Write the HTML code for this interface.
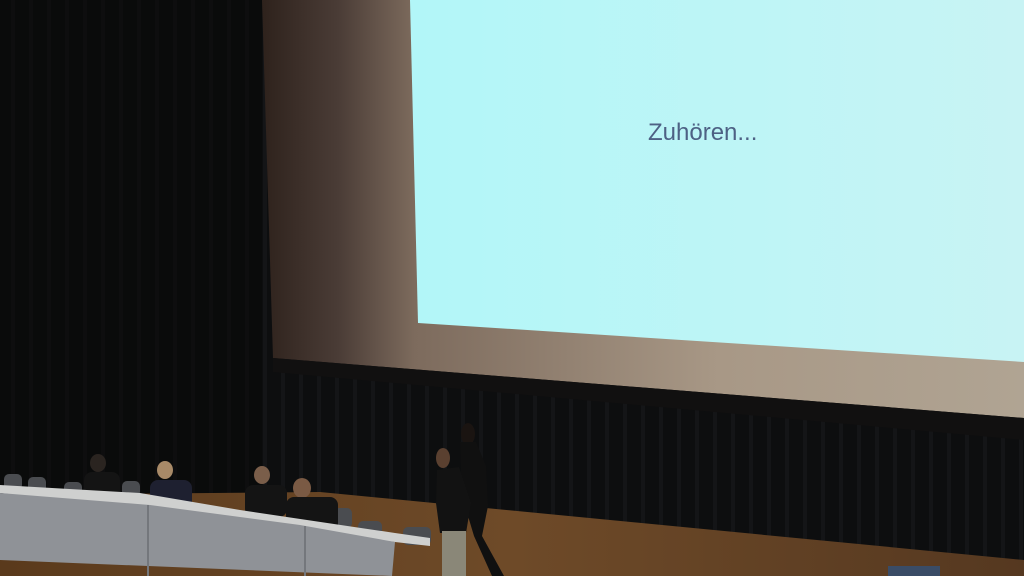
<!DOCTYPE html>
<html><head><meta charset="utf-8"><style>
html,body{margin:0;padding:0;background:#0b0b0c;width:1024px;height:576px;overflow:hidden}
svg{display:block}
</style></head><body>
<svg width="1024" height="576" viewBox="0 0 1024 576" xmlns="http://www.w3.org/2000/svg">
<defs>
<linearGradient id="frame" x1="0" x2="1" y1="0" y2="0">
<stop offset="0" stop-color="#2e221c"/><stop offset="0.1" stop-color="#4a3c36"/><stop offset="0.2" stop-color="#7d6b5d"/><stop offset="0.6" stop-color="#a89886"/><stop offset="1" stop-color="#b0a493"/>
</linearGradient>
<linearGradient id="blue" x1="0" x2="1" y1="0" y2="0">
<stop offset="0" stop-color="#b2f6f8"/><stop offset="0.6" stop-color="#bff5f6"/><stop offset="1" stop-color="#c8f3f4"/>
</linearGradient>
<linearGradient id="floor" x1="0" x2="1" y1="0" y2="0">
<stop offset="0" stop-color="#5a3a1c"/><stop offset="0.5" stop-color="#6e4a28"/><stop offset="1" stop-color="#553820"/>
</linearGradient>
<pattern id="curt" width="18" height="10" patternUnits="userSpaceOnUse">
<rect width="18" height="10" fill="#0d0e0f"/><rect x="11" width="4" height="10" fill="#141517"/>
</pattern>
</defs>
<rect width="1024" height="576" fill="url(#curt)"/>
<rect x="0" y="0" width="262" height="576" fill="#080808" opacity="0.5"/>
<!-- floor -->
<polygon points="0,495 320,492 1024,560 1024,576 0,576" fill="url(#floor)"/>
<!-- screen frame -->
<polygon points="262,0 1024,0 1024,418 273,358" fill="url(#frame)"/>
<polygon points="273,358 1024,418 1024,440 273,372" fill="#111010"/>
<!-- projection -->
<polygon points="410,0 1024,0 1024,362 418,323" fill="url(#blue)"/>
<text x="648" y="140" font-family="Liberation Sans, sans-serif" font-size="24" fill="#4d6184">Zuhören...</text>
<!-- chairs -->
<g fill="#4a4c50">
<rect x="4" y="474" width="18" height="16" rx="5"/><rect x="28" y="477" width="18" height="16" rx="5"/>
<rect x="64" y="482" width="18" height="14" rx="5"/>
<rect x="122" y="481" width="18" height="16" rx="5"/><rect x="334" y="508" width="18" height="20" rx="5"/>
<rect x="358" y="521" width="24" height="16" rx="5"/><rect x="403" y="527" width="28" height="18" rx="5"/>
</g>
<!-- people at table -->
<g fill="#141414">
<ellipse cx="98" cy="463" rx="8" ry="9" fill="#2a2420"/><rect x="84" y="472" width="36" height="28" rx="8"/>
<ellipse cx="165" cy="470" rx="8" ry="9" fill="#a88a68"/><rect x="150" y="480" width="42" height="30" rx="8" fill="#1e2030"/>
<ellipse cx="262" cy="475" rx="8" ry="9" fill="#7a5e4a"/><rect x="245" y="485" width="42" height="32" rx="8"/>
<ellipse cx="302" cy="488" rx="9" ry="10" fill="#7a5a44"/><rect x="286" y="497" width="52" height="34" rx="8"/>
</g>
<!-- table top -->
<polygon points="0,485 140,493 240,510 395,533 430,538 430,546 395,542 0,493" fill="#cfd0cf"/>
<!-- table front -->
<polygon points="0,493 150,505 300,525 395,542 392,576 0,560" fill="#8f9297"/>
<line x1="148" y1="505" x2="148" y2="576" stroke="#74777c" stroke-width="2"/>
<line x1="305" y1="526" x2="305" y2="576" stroke="#74777c" stroke-width="2"/>
<!-- standing people -->
<ellipse cx="468" cy="434" rx="7" ry="11" fill="#1a1411"/>
<path d="M460,442 l16,0 l10,24 l2,40 l-6,30 l22,40 l-12,0 l-18,-40 l-12,-40z" fill="#101010"/>
<ellipse cx="443" cy="458" rx="7" ry="10" fill="#5a4030"/>
<path d="M437,470 l22,-3 l12,36 l-5,30 l-26,0 l-4,-30z" fill="#121212"/>
<rect x="442" y="531" width="24" height="45" fill="#8a8778"/>
<rect x="888" y="566" width="52" height="10" fill="#3a4c66"/>
</svg>
</body></html>
